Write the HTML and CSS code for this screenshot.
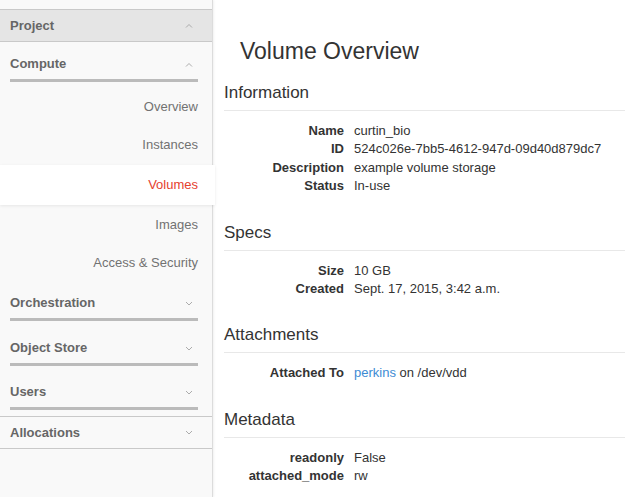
FILE: index.html
```html
<!DOCTYPE html>
<html>
<head>
<meta charset="utf-8">
<title>Volume Overview</title>
<link rel="stylesheet" href="styles.css">
</head>
<body>
<div class="layout">
  <nav class="sidebar">
    <div class="panel">
      <div class="panel-head">
        <span>Project</span>
        <svg class="chev" width="8" height="5" viewBox="0 0 8 5"><polyline points="1,4.5 4,1.5 7,4.5"/></svg>
      </div>
      <div class="group">
        <div class="group-head first">
          <span>Compute</span>
          <svg class="chev" width="8" height="5" viewBox="0 0 8 5"><polyline points="1,4.5 4,1.5 7,4.5"/></svg>
        </div>
        <div class="bar"></div>
        <ul class="items">
          <li>Overview</li>
          <li>Instances</li>
          <li class="active">Volumes</li>
          <li>Images</li>
          <li>Access &amp; Security</li>
        </ul>
      </div>
      <div class="group">
        <div class="group-head">
          <span>Orchestration</span>
          <svg class="chev" width="8" height="5" viewBox="0 0 8 5"><polyline points="1,1 4,4 7,1"/></svg>
        </div>
        <div class="bar"></div>
      </div>
      <div class="group">
        <div class="group-head">
          <span>Object Store</span>
          <svg class="chev" width="8" height="5" viewBox="0 0 8 5"><polyline points="1,1 4,4 7,1"/></svg>
        </div>
        <div class="bar"></div>
      </div>
      <div class="group last">
        <div class="group-head tight">
          <span>Users</span>
          <svg class="chev" width="8" height="5" viewBox="0 0 8 5"><polyline points="1,1 4,4 7,1"/></svg>
        </div>
        <div class="bar"></div>
      </div>
    </div>
    <div class="panel">
      <div class="panel-head plain">
        <span>Allocations</span>
        <svg class="chev" width="8" height="5" viewBox="0 0 8 5"><polyline points="1,1 4,4 7,1"/></svg>
      </div>
    </div>
  </nav>
  <main class="main">
    <h1 class="title">Volume Overview</h1>

    <section class="info">
      <h3>Information</h3>
      <dl>
        <dt>Name</dt><dd>curtin_bio</dd>
        <dt>ID</dt><dd>524c026e-7bb5-4612-947d-09d40d879dc7</dd>
        <dt>Description</dt><dd>example volume storage</dd>
        <dt>Status</dt><dd>In-use</dd>
      </dl>
    </section>

    <section class="info">
      <h3>Specs</h3>
      <dl>
        <dt>Size</dt><dd>10 GB</dd>
        <dt>Created</dt><dd>Sept. 17, 2015, 3:42 a.m.</dd>
      </dl>
    </section>

    <section class="info">
      <h3>Attachments</h3>
      <dl>
        <dt>Attached To</dt><dd><a class="link" href="#">perkins</a> on /dev/vdd</dd>
      </dl>
    </section>

    <section class="info">
      <h3>Metadata</h3>
      <dl>
        <dt>readonly</dt><dd>False</dd>
        <dt>attached_mode</dt><dd>rw</dd>
      </dl>
    </section>
  </main>
</div>
</body>
</html>
```
FILE: styles.css
```css
html, body {
  margin: 0;
  padding: 0;
  height: 100%;
  background: #fff;
  font-family: "Liberation Sans", Arial, sans-serif;
  font-size: 13px;
  color: #333;
}

.layout {
  display: flex;
  height: 497px;
  overflow: hidden;
}

.sidebar {
  width: 212px;
  flex: none;
  background: #f9f9f9;
  border-right: 1px solid #dcdcdc;
  box-shadow: 1px 0 2px rgba(0, 0, 0, 0.06);
  padding-top: 9px;
  position: relative;
  z-index: 1;
}

.panel-head {
  display: flex;
  align-items: center;
  justify-content: space-between;
  height: 31px;
  padding: 0 19px 0 10px;
  background: #e5e5e5;
  border-top: 1px solid #c9c9c9;
  border-bottom: 1px solid #c9c9c9;
  font-weight: bold;
  color: #666;
  line-height: 16px;
}

.panel-head.plain {
  background: #f9f9f9;
  border-top: none;
}

.panel:first-child {
  border-bottom: 1px solid #c9c9c9;
}

.chev {
  fill: none;
  stroke: #a3a3a3;
  stroke-width: 0.9;
}

.group {
  padding-bottom: 6px;
}

.group.last {
  padding-bottom: 6px;
}

.group-head {
  display: flex;
  align-items: center;
  justify-content: space-between;
  padding: 13px 19px 0 10px;
  height: 16px;
  line-height: 16px;
  font-weight: bold;
  color: #666;
}

.group-head.first {
  padding-top: 14px;
}

.group-head.tight {
  padding-top: 12px;
}

.bar {
  height: 3px;
  background: #bbb;
  margin: 7px 14px 0 10px;
}

.items {
  list-style: none;
  margin: 6px 0 -6px;
  padding: 0;
}

.items li {
  height: 38px;
  line-height: 38px;
  text-align: right;
  padding-right: 14px;
  color: #727272;
}

.items li.active {
  height: 40px;
  line-height: 40px;
  margin: 1px -3px 1px 0;
  padding-right: 17px;
  background: #fff;
  color: #e5412f;
  position: relative;
  box-shadow: 0 1px 3px rgba(0, 0, 0, 0.08);
}

.main {
  flex: 1;
  padding: 38px 0 0 11px;
}

.title {
  margin: 0 0 19px 16px;
  font-size: 23px;
  line-height: 26px;
  font-weight: normal;
  color: #333;
}

.info h3 {
  margin: 0;
  font-size: 17px;
  line-height: 19px;
  font-weight: normal;
  color: #333;
  padding-bottom: 8px;
  border-bottom: 1px solid #e8e8e8;
}

.info dl {
  display: grid;
  grid-template-columns: 120px 1fr;
  column-gap: 10px;
  margin: 11px 0 27px;
  line-height: 18.4px;
}

.info dt {
  text-align: right;
  font-weight: bold;
  color: #333;
}

.info dd {
  margin: 0;
  color: #333;
}

.link {
  color: #3d8bd4;
  text-decoration: none;
}
```
